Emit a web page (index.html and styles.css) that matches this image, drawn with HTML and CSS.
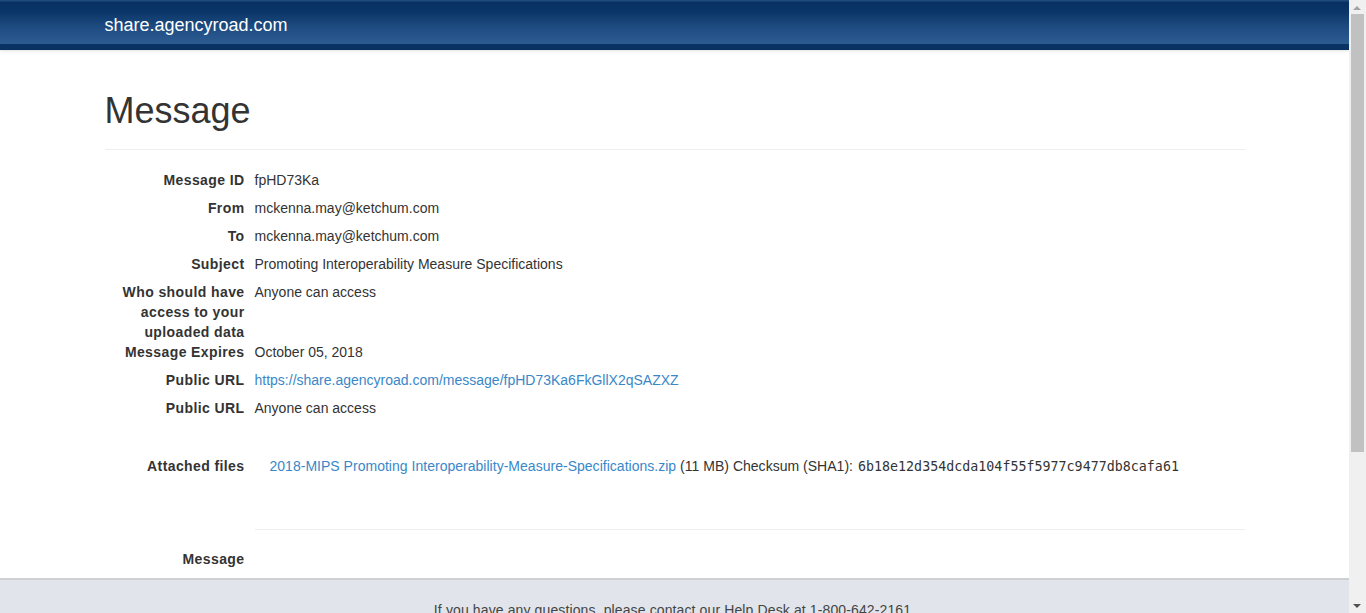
FILE: index.html
```html
<!DOCTYPE html>
<html>
<head>
<meta charset="utf-8">
<title>Message</title>
<link rel="stylesheet" href="styles.css">
</head>
<body>
<div class="page">
  <header class="navbar">
    <div class="container">
      <a class="brand" href="#">share.agencyroad.com</a>
    </div>
  </header>
  <main class="container">
    <div class="page-header"><h1>Message</h1></div>
    <dl class="details">
      <dt>Message ID</dt><dd>fpHD73Ka</dd>
      <dt>From</dt><dd>mckenna.may@ketchum.com</dd>
      <dt>To</dt><dd>mckenna.may@ketchum.com</dd>
      <dt>Subject</dt><dd>Promoting Interoperability Measure Specifications</dd>
      <dt>Who should have access to your uploaded data</dt><dd>Anyone can access</dd>
      <dt>Message Expires</dt><dd>October 05, 2018</dd>
      <dt>Public URL</dt><dd><a href="#">https://share.agencyroad.com/message/fpHD73Ka6FkGllX2qSAZXZ</a></dd>
      <dt>Public URL</dt><dd>Anyone can access</dd>
      <dt class="files-label">Attached files</dt>
      <dd class="files"><a href="#">2018-MIPS Promoting Interoperability-Measure-Specifications.zip</a> (11 MB) Checksum (SHA1): <code>6b18e12d354dcda104f55f5977c9477db8cafa61</code></dd>
      <dt class="empty"></dt><dd class="rule"><hr></dd>
      <dt>Message</dt><dd></dd>
    </dl>
  </main>
  <footer class="footer">
    <p>If you have any questions, please contact our Help Desk at 1-800-642-2161</p>
  </footer>
</div>
<div class="scrollbar">
  <div class="arrow up"></div>
  <div class="thumb"></div>
  <div class="arrow down"></div>
</div>
</body>
</html>
```
FILE: styles.css
```css
html, body {
  margin: 0;
  padding: 0;
  height: 100%;
  overflow: hidden;
}
body {
  font-family: "Liberation Sans", Arial, Helvetica, sans-serif;
  font-size: 14px;
  line-height: 20px;
  color: #333;
  background: #fff;
}
.page {
  width: 1349px;
  height: 613px;
  overflow: hidden;
}
.container {
  width: 1140px;
  margin: 0 auto;
  padding: 0 15px;
  box-sizing: content-box;
}
.navbar {
  height: 50px;
  box-sizing: border-box;
  background: linear-gradient(to bottom, #1f4b7c 0, #1f4b7c 1px, #072f62 2px, #0b3668 12px, #214f85 30px, #2c5c92 44px, #0a3364 44px, #0a3364 49px, #062c5c 50px);
  box-shadow: 0 1px 3px rgba(0,0,0,0.12);
  position: relative;
  z-index: 1;
}
.brand {
  display: block;
  color: #fff;
  text-decoration: none;
  font-size: 18px;
  line-height: 20px;
  padding: 15px 0 15px 0;
}
.page-header {
  margin: 40px 0 20px;
  padding-bottom: 9px;
  border-bottom: 1px solid #eee;
}
.page-header h1 {
  margin: 0 0 10px;
  font-size: 36px;
  font-weight: 500;
  line-height: 40px;
  color: #333;
  position: relative;
  top: 1px;
}
.details {
  display: grid;
  grid-template-columns: 140px 1fr;
  column-gap: 10px;
  margin: 0;
}
.details dt {
  font-weight: bold;
  text-align: right;
  margin: 0;
  letter-spacing: 0.4px;
}
.details dd {
  margin: 0;
  padding-bottom: 8px;
}
.details a {
  color: #3a87c8;
  text-decoration: none;
}
.details .files-label,
.details .files {
  margin-top: 30px;
}
.details .files {
  padding-left: 15px;
  letter-spacing: 0.02px;
}
.details code {
  font-family: "DejaVu Sans Mono", "Liberation Mono", monospace;
  font-size: 13.3px;
  color: #333;
  margin-left: 1px;
}
.details .empty {
  margin: 0;
}
.details .rule {
  padding: 0;
}
.details hr {
  border: 0;
  border-top: 1px solid #eee;
  margin: 44px 0 19px;
}
.footer {
  margin-top: 9px;
  background: #e1e4eb;
  border-top: 2px solid #cfd0d3;
  height: 200px;
  text-align: center;
  color: #444;
}
.footer p {
  margin: 0;
  padding: 20px 4px 0 0;
  line-height: 20px;
  letter-spacing: 0.12px;
}
.scrollbar {
  position: fixed;
  top: 0;
  right: 0;
  width: 17px;
  height: 613px;
  background: #f0f0f0;
}
.thumb {
  position: absolute;
  left: 2px;
  top: 14px;
  width: 13px;
  height: 438px;
  background: #c1c1c1;
}
.arrow {
  position: absolute;
  left: 4px;
  width: 0;
  height: 0;
  border-left: 4px solid transparent;
  border-right: 4px solid transparent;
}
.arrow.up {
  top: 6px;
  border-bottom: 4px solid #a3a3a3;
}
.arrow.down {
  bottom: 5px;
  border-top: 4px solid #505050;
}
```
